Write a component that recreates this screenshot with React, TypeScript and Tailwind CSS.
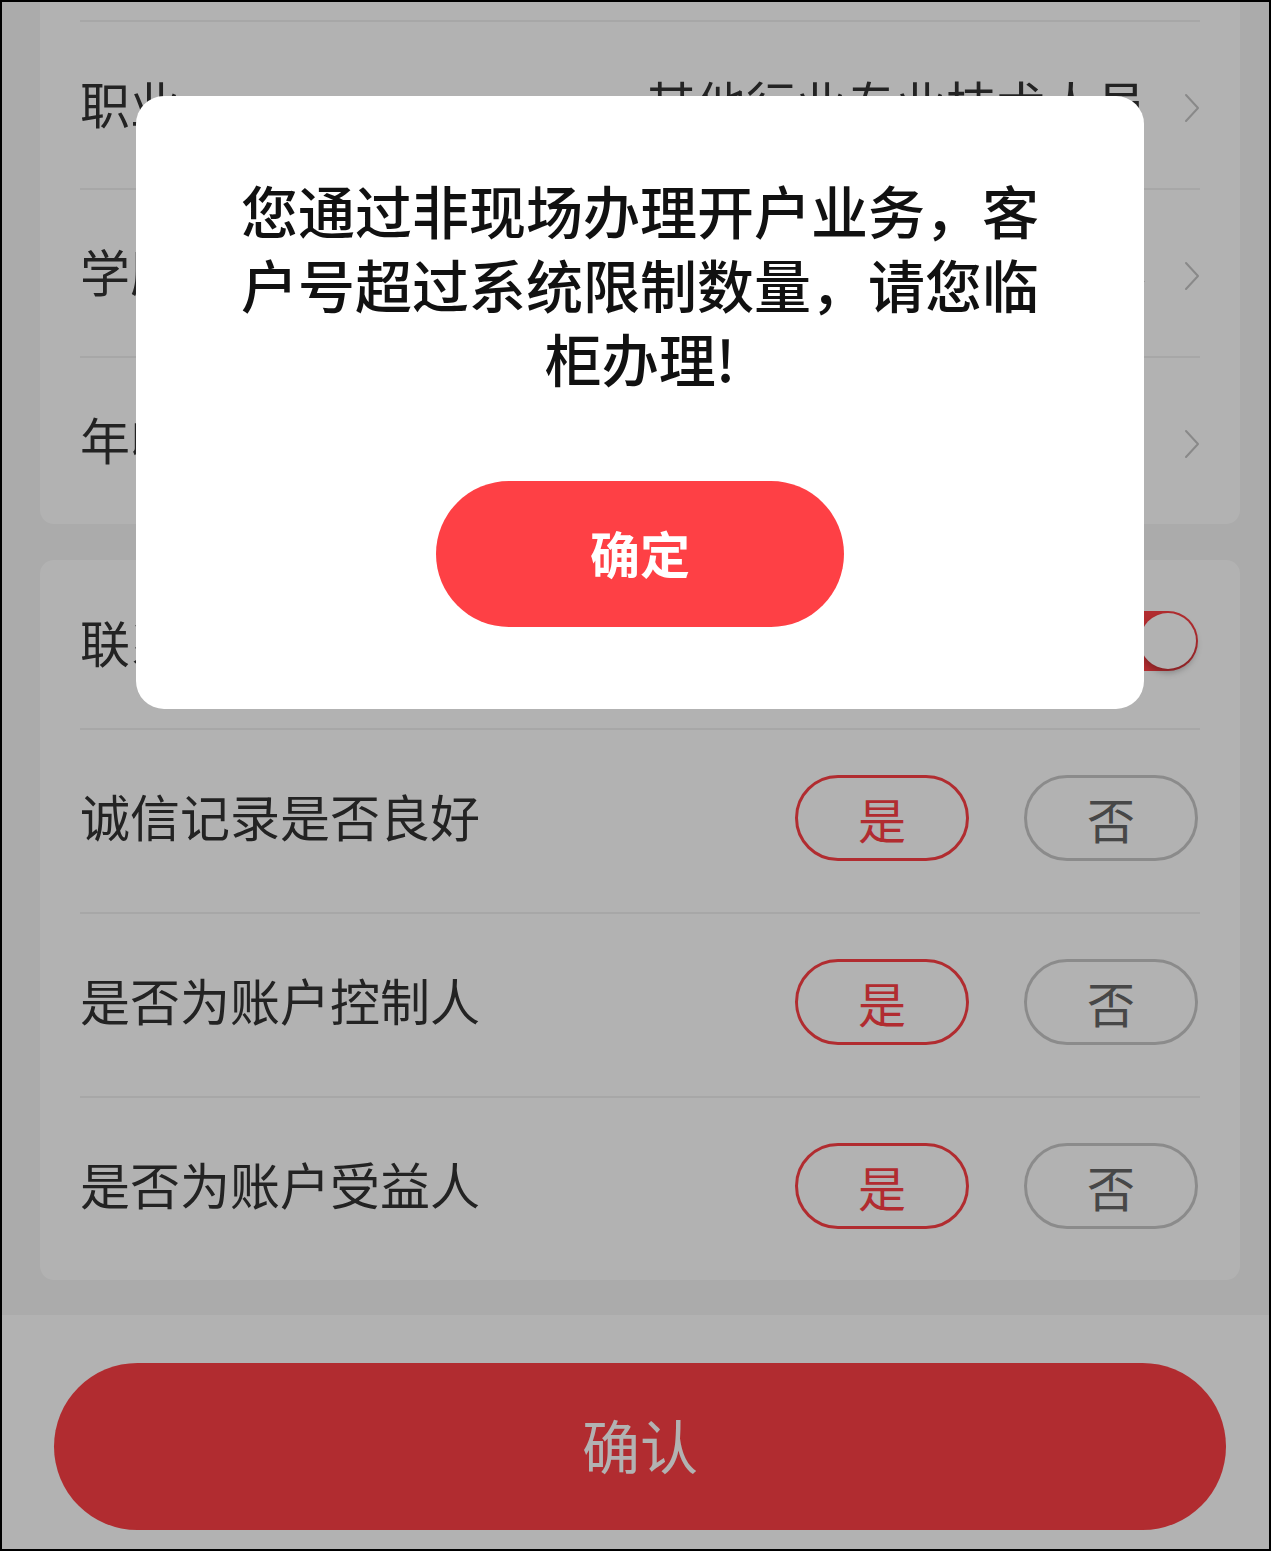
import React from "react";

const font = "font-['Noto_Sans_CJK_SC','Noto_Sans',sans-serif]";

function Chevron() {
  return (
    <svg width="16" height="30" viewBox="0 0 16 30" fill="none" className="shrink-0 mt-[12px]">
      <path d="M2 2 L14 15 L2 28" stroke="#c4c4c4" strokeWidth="2" strokeLinecap="round" strokeLinejoin="round" />
    </svg>
  );
}

function SelectRow(props: { label: string; value: string }) {
  return (
    <div className="h-[168px] border-t-2 border-[#efefef] flex items-center pb-[6px]">
      <span className="text-[50px] text-[#333]">{props.label}</span>
      <span className="ml-auto mr-[38px] text-[50px] text-[#333]">{props.value}</span>
      <Chevron />
    </div>
  );
}

function ChoiceRow(props: { label: string }) {
  return (
    <div className="h-[184px] border-t-2 border-[#efefef] flex items-center pb-[6px]">
      <span className="text-[50px] text-[#333] mb-[6px]">{props.label}</span>
      <div className="ml-auto flex items-center gap-[55px] mr-[2px]">
        <button className="w-[174px] h-[86px] rounded-full border-[3px] border-[#fe4045] text-[#fe4045] text-[48px] leading-none">
          是
        </button>
        <button className="w-[174px] h-[86px] rounded-full border-[3px] border-[#c8c8c8] text-[#666] text-[48px] leading-none">
          否
        </button>
      </div>
    </div>
  );
}

function Toggle() {
  return (
    <div className="w-[100px] h-[60px] rounded-full bg-[#fe4045] p-[2px] flex justify-end mr-[2px]">
      <div className="w-[56px] h-[56px] rounded-full bg-white shadow-[0_4px_6px_rgba(0,0,0,0.25)]" />
    </div>
  );
}

export default function App() {
  return (
    <div className={`w-[1271px] h-[1551px] border-2 border-black bg-[#f5f5f5] relative overflow-hidden flex flex-col ${font}`}>
      {/* first card, scrolled so its top is off screen */}
      <div className="ml-[38px] w-[1200px] bg-white rounded-b-[14px] pt-[18px] px-[40px] shrink-0">
        <SelectRow label="职业" value="其他行业专业技术人员" />
        <SelectRow label="学历" value="本科" />
        <SelectRow label="年收入" value="10万以下" />
      </div>

      <div className="ml-[38px] mt-[36px] w-[1200px] bg-white rounded-[14px] px-[40px] shrink-0">
        <div className="h-[168px] flex items-center pb-[6px]">
          <span className="text-[50px] text-[#333]">联系地址同居住地址</span>
          <div className="ml-auto">
            <Toggle />
          </div>
        </div>
        <ChoiceRow label="诚信记录是否良好" />
        <ChoiceRow label="是否为账户控制人" />
        <ChoiceRow label="是否为账户受益人" />
      </div>

      <div className="mt-[35px] flex-1 bg-white pt-[48px]">
        <button className="ml-[52px] w-[1172px] h-[167px] rounded-full bg-[#fe4045] text-white text-[58px] pb-[4px]">
          确认
        </button>
      </div>

      {/* mask */}
      <div className="absolute inset-0 bg-black/30" />

      {/* dialog */}
      <div className="absolute left-[134px] top-[94px] w-[1008px] bg-white rounded-[28px] pt-[76px] pb-[82px] flex flex-col items-center">
        <p className="px-[94px] text-center text-[57px] leading-[74px] font-medium text-[#111]">
          您通过非现场办理开户业务，客户号超过系统限制数量，请您临柜办理!
        </p>
        <button className="mt-[87px] w-[408px] h-[146px] rounded-full bg-[#fe4045] text-white text-[50px] font-bold pb-[4px]">
          确定
        </button>
      </div>
    </div>
  );
}
